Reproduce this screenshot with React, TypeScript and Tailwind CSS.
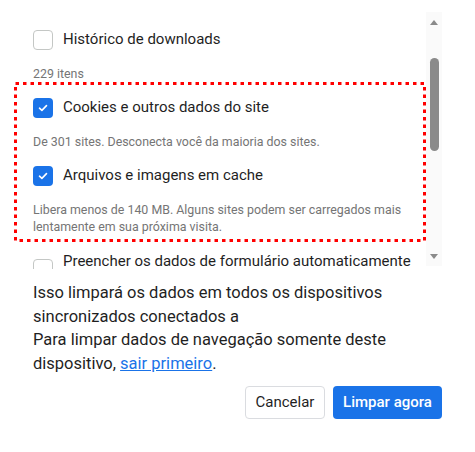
import React from 'react';

interface IItemProps {
    label: string;
    checked: boolean;
    description?: string[];
}

const Checkbox = ({ checked }: { checked: boolean }) => {
    if (checked) {
        return (
            <div className="w-[20px] h-[20px] rounded-[4px] bg-[#1a73e8] flex items-center justify-center shrink-0">
                <svg width="10" height="8" viewBox="0 0 10 8" fill="none">
                    <path d="M1.5 4.2 L3.9 6.4 L8.5 1.6" stroke="white" strokeWidth="1.6" strokeLinecap="round" strokeLinejoin="round" />
                </svg>
            </div>
        );
    }
    return <div className="w-[20px] h-[20px] rounded-[4px] border-[1.5px] border-[#c4c7c5] bg-white shrink-0" />;
};

const Item = ({ label, checked, description }: IItemProps) => (
    <div className="flex flex-col">
        <div className="flex items-center gap-[10px] h-[20px]">
            <Checkbox checked={checked} />
            <span className="text-[15px] text-[#1f1f1f] whitespace-nowrap">{label}</span>
        </div>
        {description && (
            <div className="mt-[15px] mb-[16px] text-[12.4px] leading-[17px] text-[#757575]">
                {description.map(line => (
                    <div key={line}>{line}</div>
                ))}
            </div>
        )}
    </div>
);

export default function App() {
    return (
        <div
            className="w-[475px] h-[452px] bg-white pr-[33px] pt-[12px]"
            style={{ fontFamily: 'Roboto, "Noto Sans", sans-serif' }}
        >
            <div className="flex items-start h-[254px]">
                <div className="relative flex-1 h-[257px] overflow-hidden pl-[33px]">
                    <div className="pt-[17.5px]">
                        <Item label="Histórico de downloads" checked={false} description={["229 itens"]} />
                        <Item
                            label="Cookies e outros dados do site"
                            checked={true}
                            description={["De 301 sites. Desconecta você da maioria dos sites."]}
                        />
                        <Item
                            label="Arquivos e imagens em cache"
                            checked={true}
                            description={[
                                "Libera menos de 140 MB. Alguns sites podem ser carregados mais",
                                "lentamente em sua próxima visita.",
                            ]}
                        />
                        {/* partly scrolled out of view */}
                        <div className="flex items-start gap-[10px]">
                            <div className="mt-[8.5px]">
                                <Checkbox checked={false} />
                            </div>
                            <span className="text-[15px] leading-[20px] text-[#1f1f1f] whitespace-nowrap">
                                Preencher os dados de formulário automaticamente
                            </span>
                        </div>
                    </div>

                    {/* red highlight around the selected items */}
                    <svg className="absolute left-[14px] top-[70px]" width="412" height="160">
                        <rect
                            x="1.5"
                            y="1.5"
                            width="409"
                            height="157"
                            fill="none"
                            stroke="#ff0000"
                            strokeWidth="3"
                            strokeDasharray="3.5 4"
                        />
                    </svg>
                </div>

                <div className="w-[16px] h-[254px] bg-[#fafafa] flex flex-col items-center">
                    <svg className="mt-[8px]" width="8" height="5" viewBox="0 0 8 5">
                        <path d="M0 5 L4 0 L8 5 Z" fill="#8a8a8a" />
                    </svg>
                    <div className="mt-[33px] w-[9px] h-[93px] rounded-full bg-[#8a8a8a]" />
                    <svg className="mt-auto mb-[7px]" width="8" height="5" viewBox="0 0 8 5">
                        <path d="M0 0 L8 0 L4 5 Z" fill="#8a8a8a" />
                    </svg>
                </div>
            </div>

            <div className="pl-[33px] mt-[15px] text-[16.5px] leading-[23.7px] text-[#1f1f1f]">
                <div>Isso limpará os dados em todos os dispositivos</div>
                <div>sincronizados conectados a</div>
                <div>Para limpar dados de navegação somente deste</div>
                <div>
                    dispositivo, <a className="text-[#1a73e8] underline">sair primeiro</a>.
                </div>
            </div>

            <div className="flex justify-end gap-[8px] mt-[10px]">
                <button className="h-[33px] w-[80px] rounded-[4px] border border-[#dadce0] bg-white text-[15px] text-[#1f1f1f]">
                    Cancelar
                </button>
                <button className="h-[33px] w-[109px] rounded-[4px] bg-[#1a73e8] text-[15px] font-medium text-white">
                    Limpar agora
                </button>
            </div>
        </div>
    );
}
